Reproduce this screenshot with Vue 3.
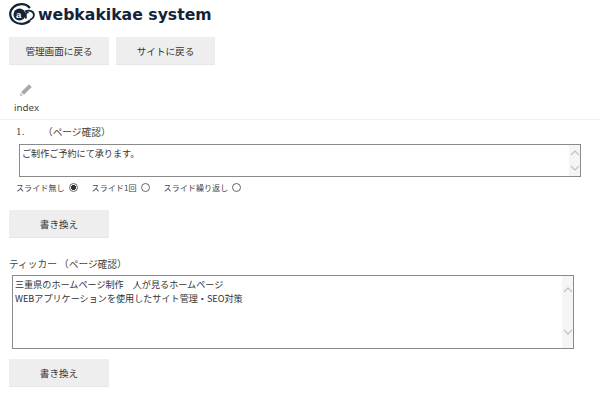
<template>
  <div class="page">
    <h1 class="logo">
      <svg class="logo-mark" width="26" height="22" viewBox="0 0 26 22">
        <path d="M21 5C18.5 2.3 15.5 1.2 12.5 1.2C6.2 1.2 1.2 5.6 1.2 11C1.2 16.6 6.2 20.8 12.5 20.8C16 20.8 18.8 19.6 21 17.4" fill="none" stroke="#14233a" stroke-width="2.2" />
        <circle cx="10.5" cy="11.5" r="6" fill="#14233a" />
        <text x="7" y="15" class="logo-letter">a</text>
        <path d="M16 8.5C19.5 6.8 24 7.5 24.8 11C25.2 13.6 23.5 15.8 21 16.8" fill="none" stroke="#14233a" stroke-width="1.8" />
        <path d="M16.8 15.5V11C16.8 9.8 18 9.2 19.6 9.6" fill="none" stroke="#14233a" stroke-width="1.8" />
      </svg>
      <span>webkakikae system</span>
    </h1>

    <div class="nav-btns">
      <button class="btn">管理画面に戻る</button>
      <button class="btn">サイトに戻る</button>
    </div>

    <div class="page-head">
      <svg class="pencil" width="14" height="14" viewBox="0 0 14 14">
        <path d="M10 1.2L12.8 4L5 11.8L2.2 9Z" fill="#a9a9a9" />
        <path d="M1.7 9.8L4.2 12.3L0.8 13.2Z" fill="#c4c4c4" />
      </svg>
      <div class="page-name">index</div>
    </div>

    <section class="slide-block">
      <div class="slide-title"><span class="num">1.</span><span>（ページ確認）</span></div>
      <div class="area-wrap small">
        <textarea class="area" v-model="slideText"></textarea>
        <div class="scroll plain">
          <svg width="10" height="8" viewBox="0 0 10 8"><path d="M1 6L5 2L9 6" fill="none" stroke="#c6c6c6" stroke-width="1.4" /></svg>
          <svg width="10" height="8" viewBox="0 0 10 8"><path d="M1 2L5 6L9 2" fill="none" stroke="#c6c6c6" stroke-width="1.4" /></svg>
        </div>
      </div>
      <div class="radios">
        <label v-for="o in options" :key="o.value" class="radio">
          {{ o.label }}
          <input type="radio" name="slide" :value="o.value" v-model="mode" />
        </label>
      </div>
      <button class="btn">書き換え</button>
    </section>

    <section class="ticker">
      <div class="ticker-title">ティッカー （ページ確認）</div>
      <div class="area-wrap large">
        <textarea class="area" v-model="tickerText"></textarea>
        <div class="scroll">
          <svg width="10" height="8" viewBox="0 0 10 8"><path d="M1 6L5 2L9 6" fill="none" stroke="#c6c6c6" stroke-width="1.4" /></svg>
          <svg width="10" height="8" viewBox="0 0 10 8"><path d="M1 2L5 6L9 2" fill="none" stroke="#c6c6c6" stroke-width="1.4" /></svg>
        </div>
      </div>
      <button class="btn">書き換え</button>
    </section>
  </div>
</template>

<script setup>
import { ref } from 'vue'

const slideText = ref('ご制作ご予約にて承ります。')
const tickerText = ref('三重県のホームページ制作　人が見るホームページ\nWEBアプリケーションを使用したサイト管理・SEO対策')
const mode = ref('none')
const options = [
  { value: 'none', label: 'スライド無し' },
  { value: 'once', label: 'スライド1回' },
  { value: 'loop', label: 'スライド繰り返し' },
]
</script>

<style>
html, body { margin: 0; background: #fff; }
</style>

<style scoped>
.page {
  width: 600px;
  height: 400px;
  overflow: hidden;
  font-family: "Noto Sans CJK JP", "Noto Sans", sans-serif;
  font-size: 9.7px;
  color: #444;
  box-sizing: border-box;
  padding-top: 3px;
}
.logo {
  display: flex;
  align-items: center;
  gap: 3px;
  height: 22px;
  margin: 0 0 12px 9px;
  font-family: "DejaVu Sans", sans-serif;
  font-size: 15.7px;
  font-weight: 700;
  color: #14233a;
}
.logo-mark { flex: none; }
.logo-letter { font-family: "Liberation Sans", sans-serif; font-size: 9.5px; font-weight: 700; fill: #fff; }
.nav-btns { display: flex; gap: 7px; margin-left: 9px; }
.nav-btns .btn:last-child { width: 99px; }
.btn {
  display: block;
  width: 100px;
  height: 28px;
  padding: 0;
  background: #eee;
  border: none;
  border-bottom: 1px solid #e6e6e6;
  font-family: inherit;
  font-size: 9.6px;
  color: #333;
}
.page-head {
  margin-top: 18px;
  height: 36px;
  border-bottom: 1px solid #f0f0f0;
}
.pencil { display: block; margin-left: 19px; }
.page-name { margin: 4px 0 0 14px; font-family: "Noto Sans", sans-serif; font-size: 9.8px; line-height: 14px; }
.slide-block { padding-top: 5px; }
.slide-title { display: flex; margin-left: 16px; line-height: 14px; height: 14px; }
.num { width: 27px; font-family: "DejaVu Serif", serif; font-size: 9px; }
.area-wrap { position: relative; box-sizing: border-box; }
.area-wrap.small { margin: 5px 0 0 19px; width: 562px; height: 33px; }
.area-wrap.large { margin: 4px 0 0 12px; width: 562px; height: 74px; }
.area {
  display: block;
  width: 100%;
  height: 100%;
  box-sizing: border-box;
  margin: 0;
  padding: 1px 2px;
  border: 1px solid #8a8a8a;
  border-radius: 0;
  outline: none;
  resize: none;
  overflow: hidden;
  font-family: inherit;
  font-size: 9.1px;
  line-height: 14px;
  color: #333;
  background: #fff;
}
.scroll {
  position: absolute;
  top: 1px;
  right: 1px;
  bottom: 1px;
  width: 11px;
  display: flex;
  flex-direction: column;
  justify-content: space-between;
  align-items: center;
  padding: 10px 0 12px;
  box-sizing: border-box;
  background: #f5f5f5;
}
.scroll.plain { padding: 4px 0; }
.radios { display: flex; gap: 14px; margin: 3px 0 0 16px; height: 14px; align-items: center; font-size: 8.1px; }
.radio { display: flex; align-items: center; gap: 4px; }
.radio input {
  appearance: none;
  box-sizing: border-box;
  width: 9px;
  height: 9px;
  margin: 0;
  border: 1px solid #666;
  border-radius: 50%;
  background: #fff;
}
.radio input:checked { background: radial-gradient(circle, #333 0 2.4px, #fff 2.8px); }
.slide-block > .btn { margin: 16px 0 0 9px; }
.ticker { margin-top: 19px; }
.ticker-title { margin-left: 9px; line-height: 14px; height: 14px; }
.ticker > .btn { margin: 10px 0 0 9px; }
</style>
